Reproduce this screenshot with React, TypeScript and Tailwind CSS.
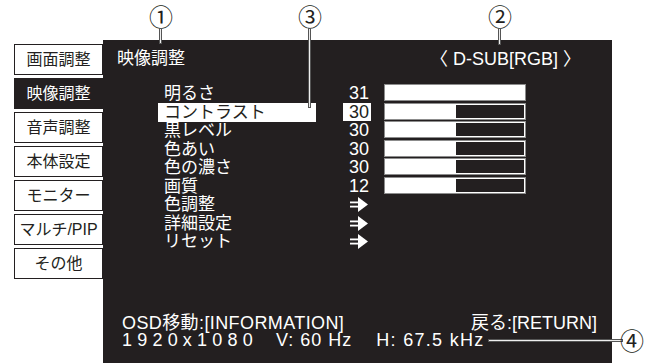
import React from 'react';

const TABS = ['画面調整', '映像調整', '音声調整', '本体設定', 'モニター', 'マルチ/PIP', 'その他'];

type Row = { label: string; value?: string; bar?: 'full' | 'half'; arrow?: boolean; active?: boolean };

const ROWS: Row[] = [
  { label: '明るさ', value: '31', bar: 'full' },
  { label: 'コントラスト', value: '30', bar: 'half', active: true },
  { label: '黒レベル', value: '30', bar: 'half' },
  { label: '色あい', value: '30', bar: 'half' },
  { label: '色の濃さ', value: '30', bar: 'half' },
  { label: '画質', value: '12', bar: 'half' },
  { label: '色調整', arrow: true },
  { label: '詳細設定', arrow: true },
  { label: 'リセット', arrow: true },
];

function Arrow() {
  return (
    <svg width="18" height="15" viewBox="0 0 18 15" className="block">
      <rect x="0" y="4.5" width="8" height="1.8" fill="#fff" />
      <rect x="0" y="8.7" width="8" height="1.8" fill="#fff" />
      <polygon points="8,0 18,7.5 8,15" fill="#fff" />
    </svg>
  );
}

function Callout({ n }: { n: string }) {
  return (
    <span className="block text-[24px] leading-[30px] text-[#231f20]" style={{ fontFamily: '"Noto Sans CJK JP", sans-serif' }}>
      {n}
    </span>
  );
}

export default function App() {
  return (
    <div
      className="relative w-[657px] h-[363px] overflow-hidden bg-white"
      style={{ fontFamily: '"Liberation Sans", "Noto Sans CJK JP", sans-serif' }}
    >
      <div className="flex pt-[40px] pl-[14px]">
        {/* 左のタブ */}
        <div className="mt-[4px] flex w-[89px] flex-col gap-[3px]">
          {TABS.map((t, i) =>
            i === 1 ? (
              <div key={t} className="flex h-[31px] items-center justify-center bg-[#231f20] text-[16px] text-white">
                {t}
              </div>
            ) : (
              <div
                key={t}
                className="flex h-[31px] items-center justify-center whitespace-nowrap border border-[#231f20] bg-white text-[16px] text-[#231f20]"
              >
                {t}
              </div>
            )
          )}
        </div>

        {/* OSD パネル */}
        <div className="flex h-[323px] w-[509px] flex-col bg-[#231f20] text-white">
          <div className="flex items-center justify-between pt-[8px] pl-[14px] pr-[31px]">
            <span className="text-[17px] leading-[22px]">映像調整</span>
            <span className="text-[18px] leading-[22px]">〈 D-SUB[RGB] 〉</span>
          </div>

          <div className="mt-[14px] flex flex-col">
            {ROWS.map((r) => (
              <div key={r.label} className="flex h-[18.5px] items-start">
                <div
                  className={`ml-[55px] h-[19px] w-[158px] pl-[6px] text-[17px] leading-[19px] ${
                    r.active ? 'bg-white text-[#231f20]' : ''
                  }`}
                >
                  {r.label}
                </div>
                {r.arrow ? (
                  <div className="ml-[34px] pt-[2px]">
                    <Arrow />
                  </div>
                ) : (
                  <>
                    <div
                      className={`ml-[27px] h-[18px] w-[28px] pr-[2px] text-right text-[18px] leading-[18px] ${
                        r.active ? 'bg-white text-[#231f20]' : ''
                      }`}
                    >
                      {r.value}
                    </div>
                    <div className="ml-[13px] flex h-[17px] w-[142px] justify-end border border-[#8c8c8c] bg-white p-[1px]">
                      {r.bar === 'half' && <div className="h-full w-[68px] bg-[#231f20]" />}
                    </div>
                  </>
                )}
              </div>
            ))}
          </div>

          <div className="mt-auto pb-[15px] text-[18px] leading-[16.5px]">
            <div className="flex justify-between pl-[19px] pr-[15px]">
              <span className="tracking-[0.4px]">OSD移動:[INFORMATION]</span>
              <span>戻る:[RETURN]</span>
            </div>
            <div className="flex pl-[19px]">
              <span className="tracking-[5.2px]">1920x1080</span>
              <span className="ml-[18px] tracking-[1px]">V: 60 Hz</span>
              <span className="ml-[24px] tracking-[1.3px]">H: 67.5 kHz</span>
            </div>
          </div>
        </div>
      </div>

      {/* 引き出し線と番号 */}
      <div className="absolute left-[149px] top-[1px]">
        <Callout n="①" />
      </div>
      <div className="absolute left-[159px] top-[28px] h-[16px] w-[3px] border border-[#555] bg-[#eee]" />

      <div className="absolute left-[298px] top-[1px]">
        <Callout n="③" />
      </div>
      <div className="absolute left-[308px] top-[28px] h-[80px] w-[3px] border border-[#555] bg-[#eee]" />

      <div className="absolute left-[488px] top-[1px]">
        <Callout n="②" />
      </div>
      <div className="absolute left-[498px] top-[28px] h-[17px] w-[3px] border border-[#555] bg-[#eee]" />

      <div className="absolute left-[488px] top-[339px] h-[3px] w-[135px] border border-[#555] bg-[#eee]" />
      <div className="absolute left-[620px] top-[325px]">
        <Callout n="④" />
      </div>
    </div>
  );
}
